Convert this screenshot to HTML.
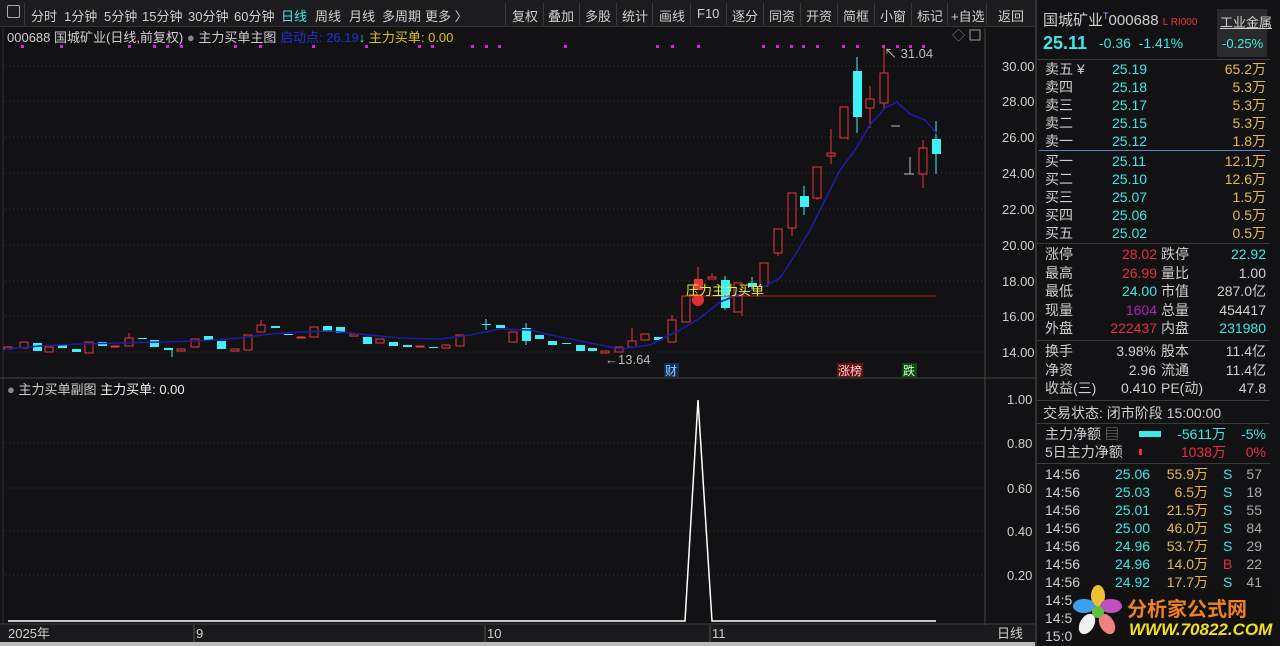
<!DOCTYPE html>
<html><head><meta charset="utf-8"><style>
*{margin:0;padding:0;box-sizing:border-box}
body{width:1280px;height:646px;background:#121214;overflow:hidden;font-family:"Liberation Sans","Noto Sans CJK SC",sans-serif;color:#ccc;position:relative}
.tb{position:absolute;left:0;top:0;width:1035px;height:27px;background:#1c1c1e;border-bottom:1px solid #333;font-size:13px}
.tb span{position:absolute;top:6px;color:#cfcfcf}
.tb i{position:absolute;top:3px;width:1px;height:22px;background:#3a3a3a}
.t{position:absolute;white-space:nowrap;font-size:13px}
.rp{position:absolute;left:1035px;top:0;width:245px;height:646px;background:#121214;border-left:2px solid #333}
.r{position:absolute;font-size:14px;white-space:nowrap}
.hl{position:absolute;left:0;width:233px;height:1px;background:#3a3a3a}
.c{color:#3ee8e8}.y{color:#e8b850}.rd{color:#e83040}.w{color:#cfcfcf}.g{color:#aaa}
</style></head><body>
<div class="tb">
<span style="left:7px;top:5px;width:13px;height:13px;border:1px solid #aaa;border-radius:2px"></span>
<i style="left:24px"></i>
<span style="left:31px">分时</span><span style="left:64px">1分钟</span><span style="left:104px">5分钟</span><span style="left:142px">15分钟</span><span style="left:188px">30分钟</span><span style="left:234px">60分钟</span><span style="left:281px;color:#3ee8e8">日线</span><span style="left:315px">周线</span><span style="left:349px">月线</span><span style="left:382px">多周期</span><span style="left:425px">更多 〉</span>
<i style="left:505px"></i><span style="left:512px">复权</span><i style="left:543px"></i><span style="left:548px">叠加</span><i style="left:579px"></i><span style="left:585px">多股</span><i style="left:616px"></i><span style="left:622px">统计</span><i style="left:652px"></i><span style="left:659px">画线</span><i style="left:690px"></i><span style="left:697px">F10</span><i style="left:726px"></i><span style="left:732px">逐分</span><i style="left:763px"></i><span style="left:769px">同资</span><i style="left:800px"></i><span style="left:806px">开资</span><i style="left:837px"></i><span style="left:843px">简框</span><i style="left:874px"></i><span style="left:880px">小窗</span><i style="left:911px"></i><span style="left:917px">标记</span><i style="left:947px"></i><span style="left:951px">+自选</span><i style="left:986px"></i><span style="left:998px">返回</span>
</div>
<div class="t w" style="left:7px;top:27px">000688 国城矿业(日线,前复权) <span style="color:#888">●</span> 主力买单主图 <span style="color:#2030d0">启动点: 26.19</span><span class="c">↓</span> <span style="color:#e0c020">主力买单: 0.00</span></div>
<div class="t w" style="left:7px;top:379px"><span style="color:#888">●</span> 主力买单副图 <span style="color:#eee">主力买单: 0.00</span></div>
<svg style="position:absolute;left:0;top:0" width="1035" height="646">
<g stroke="#3a3a3a" stroke-dasharray="1,3">
<line x1="5" y1="66" x2="985" y2="66"/><line x1="5" y1="101" x2="985" y2="101"/><line x1="5" y1="137" x2="985" y2="137"/><line x1="5" y1="173" x2="985" y2="173"/><line x1="5" y1="209" x2="985" y2="209"/><line x1="5" y1="245" x2="985" y2="245"/><line x1="5" y1="281" x2="985" y2="281"/><line x1="5" y1="316" x2="985" y2="316"/><line x1="5" y1="352" x2="985" y2="352"/>
<line x1="5" y1="443" x2="985" y2="443"/><line x1="5" y1="488" x2="985" y2="488"/><line x1="5" y1="531" x2="985" y2="531"/><line x1="5" y1="575" x2="985" y2="575"/>
</g>
<line x1="985" y1="28" x2="985" y2="642" stroke="#444"/>
<line x1="3" y1="28" x2="3" y2="642" stroke="#333"/>
<line x1="0" y1="378" x2="1035" y2="378" stroke="#444"/>
<line x1="0" y1="624" x2="1035" y2="624" stroke="#444"/>
<rect x="0" y="625" width="1035" height="17" fill="#1a1a1c"/>
<rect x="0" y="642" width="1035" height="4" fill="#bbb"/>
<g fill="#cfcfcf" font-size="13" font-family="Liberation Sans,Noto Sans CJK SC,sans-serif">
<text x="1002" y="71">30.00</text><text x="1002" y="106">28.00</text><text x="1002" y="142">26.00</text><text x="1002" y="178">24.00</text><text x="1002" y="214">22.00</text><text x="1002" y="250">20.00</text><text x="1002" y="286">18.00</text><text x="1002" y="321">16.00</text><text x="1002" y="357">14.00</text>
<text x="1007" y="404">1.00</text><text x="1007" y="448">0.80</text><text x="1007" y="493">0.60</text><text x="1007" y="536">0.40</text><text x="1007" y="580">0.20</text>
<text x="8" y="638">2025年</text><text x="196" y="638">9</text><text x="487" y="638">10</text><text x="712" y="638">11</text><text x="997" y="638">日线</text>
<text x="605" y="364" fill="#bbb">←13.64</text><text x="884" y="58" fill="#bbb">↖ 31.04</text>
</g>
<line x1="194" y1="625" x2="194" y2="642" stroke="#555"/><line x1="485" y1="625" x2="485" y2="642" stroke="#555"/><line x1="710" y1="625" x2="710" y2="642" stroke="#555"/>
<g fill="#e020e0">
<rect x="21" y="45" width="3" height="3"/><rect x="60" y="45" width="3" height="3"/><rect x="128" y="45" width="3" height="3"/><rect x="153" y="45" width="3" height="3"/><rect x="166" y="45" width="3" height="3"/><rect x="180" y="45" width="3" height="3"/><rect x="234" y="45" width="3" height="3"/><rect x="259" y="45" width="3" height="3"/><rect x="312" y="45" width="3" height="3"/><rect x="365" y="45" width="3" height="3"/><rect x="418" y="45" width="3" height="3"/><rect x="431" y="45" width="3" height="3"/><rect x="471" y="45" width="3" height="3"/><rect x="485" y="45" width="3" height="3"/><rect x="498" y="45" width="3" height="3"/><rect x="564" y="45" width="3" height="3"/><rect x="656" y="45" width="3" height="3"/><rect x="671" y="45" width="3" height="3"/><rect x="697" y="45" width="3" height="3"/><rect x="762" y="45" width="3" height="3"/><rect x="776" y="45" width="3" height="3"/><rect x="790" y="45" width="3" height="3"/><rect x="802" y="45" width="3" height="3"/><rect x="816" y="45" width="3" height="3"/><rect x="842" y="45" width="3" height="3"/><rect x="856" y="45" width="3" height="3"/><rect x="882" y="45" width="3" height="3"/><rect x="896" y="45" width="3" height="3"/><rect x="909" y="45" width="3" height="3"/><rect x="922" y="45" width="3" height="3"/>
</g>
<g fill="none" stroke="#e8383d" stroke-width="1">
<rect x="4" y="347" width="8" height="2"/><rect x="20" y="342" width="8" height="6"/><rect x="45" y="347" width="8" height="5"/><rect x="85" y="342" width="8" height="11"/><rect x="111" y="346" width="8" height="1"/><rect x="125" y="338" width="8" height="8"/><rect x="177" y="349" width="8" height="2"/><rect x="191" y="339" width="8" height="8"/><rect x="231" y="349" width="8" height="2"/><rect x="244" y="335" width="8" height="15"/><rect x="257" y="325" width="8" height="7"/><rect x="297" y="337" width="8" height="1"/><rect x="310" y="327" width="8" height="10"/><rect x="350" y="334" width="8" height="2"/><rect x="376" y="339" width="8" height="4"/><rect x="416" y="346" width="8" height="1"/><rect x="442" y="345" width="8" height="3"/><rect x="456" y="335" width="8" height="11"/><rect x="509" y="332" width="8" height="10"/><rect x="601" y="351" width="8" height="2"/><rect x="615" y="347" width="8" height="5"/><rect x="628" y="341" width="8" height="6"/><rect x="641" y="334" width="8" height="6"/>
<rect x="668" y="320" width="8" height="22"/><rect x="682" y="296" width="8" height="26"/><rect x="708" y="277" width="8" height="2"/><rect x="734" y="283" width="8" height="29"/><rect x="760" y="263" width="8" height="23"/><rect x="774" y="229" width="8" height="24"/><rect x="788" y="193" width="8" height="35"/><rect x="813" y="167" width="8" height="31"/><rect x="827" y="153" width="8" height="3"/><rect x="840" y="107" width="8" height="31"/><rect x="866" y="99" width="8" height="9"/><rect x="880" y="73" width="8" height="30"/><rect x="919" y="148" width="8" height="26"/>
</g>
<g stroke="#e8383d">
<line x1="129" y1="333" x2="129" y2="338"/><line x1="261" y1="320" x2="261" y2="325"/><line x1="632" y1="328" x2="632" y2="341"/><line x1="672" y1="315" x2="672" y2="320"/><line x1="698" y1="267" x2="698" y2="279"/><line x1="712" y1="273" x2="712" y2="277"/><line x1="742" y1="312" x2="742" y2="316"/><line x1="831" y1="129" x2="831" y2="153"/><line x1="831" y1="156" x2="831" y2="164"/><line x1="848" y1="138" x2="848" y2="140"/><line x1="870" y1="86" x2="870" y2="99"/><line x1="870" y1="108" x2="870" y2="128"/><line x1="884" y1="47" x2="884" y2="73"/><line x1="884" y1="103" x2="884" y2="110"/><line x1="923" y1="140" x2="923" y2="148"/><line x1="923" y1="174" x2="923" y2="188"/><line x1="817" y1="198" x2="817" y2="200"/><line x1="792" y1="228" x2="792" y2="236"/><line x1="778" y1="253" x2="778" y2="256"/>
</g>
<rect x="694" y="279" width="9" height="11" fill="#e8383d"/>
<g fill="#40f0f8">
<rect x="33" y="343" width="9" height="8"/><rect x="58" y="345" width="9" height="3"/><rect x="72" y="349" width="9" height="3"/><rect x="98" y="342" width="9" height="4"/><rect x="138" y="338" width="9" height="1"/><rect x="150" y="340" width="9" height="7"/><rect x="164" y="348" width="9" height="2"/><rect x="204" y="336" width="9" height="4"/><rect x="217" y="341" width="9" height="8"/><rect x="271" y="326" width="9" height="2"/><rect x="284" y="334" width="9" height="1"/><rect x="323" y="326" width="9" height="6"/><rect x="336" y="327" width="9" height="6"/><rect x="363" y="337" width="9" height="7"/><rect x="389" y="342" width="9" height="4"/><rect x="403" y="345" width="9" height="2"/><rect x="429" y="347" width="9" height="1"/><rect x="482" y="324" width="9" height="1"/><rect x="496" y="325" width="9" height="3"/><rect x="522" y="328" width="9" height="13"/><rect x="535" y="335" width="9" height="4"/><rect x="548" y="341" width="9" height="4"/><rect x="562" y="343" width="9" height="1"/><rect x="576" y="345" width="9" height="6"/><rect x="588" y="348" width="9" height="3"/>
<rect x="654" y="337" width="9" height="3"/><rect x="721" y="280" width="9" height="28"/><rect x="748" y="283" width="9" height="4"/><rect x="800" y="196" width="9" height="11"/><rect x="853" y="71" width="9" height="46"/><rect x="932" y="139" width="9" height="15"/>
</g>
<g stroke="#40f0f8">
<line x1="172" y1="350" x2="172" y2="357"/><line x1="486" y1="319" x2="486" y2="330"/><line x1="526" y1="323" x2="526" y2="345"/><line x1="804" y1="186" x2="804" y2="215"/><line x1="857" y1="57" x2="857" y2="133"/><line x1="936" y1="121" x2="936" y2="174"/><line x1="752" y1="277" x2="752" y2="290"/><line x1="725" y1="276" x2="725" y2="310"/>
</g>
<g stroke="#bbb"><line x1="891" y1="126" x2="900" y2="126"/><line x1="904" y1="174" x2="914" y2="174"/><line x1="910" y1="157" x2="910" y2="174"/></g>
<polyline fill="none" stroke="#1c1ca8" stroke-width="1.6" points="5,349 40,346 80,344 120,343 160,342 200,341 240,338 270,334 300,332 330,331 360,334 400,338 440,339 470,335 500,329 530,330 560,337 590,343 620,349 650,345 680,330 700,318 720,302 745,292 765,286 780,278 795,255 810,230 825,200 840,170 855,150 870,125 885,108 897,102 910,114 925,120 937,134"/>
<line x1="686" y1="296" x2="936" y2="296" stroke="#d02020"/>
<circle cx="698" cy="300" r="6" fill="#e03030"/>
<text x="686" y="295" fill="#f0f020" font-size="13" font-family="Noto Sans CJK SC,sans-serif">压力主力买单</text>
<rect x="664" y="363" width="15" height="14" fill="#10305a"/><text x="665" y="375" fill="#9cf" font-size="12" font-family="Noto Sans CJK SC,sans-serif">财</text>
<rect x="837" y="363" width="26" height="14" fill="#6a1010"/><text x="838" y="375" fill="#fcc" font-size="12" font-family="Noto Sans CJK SC,sans-serif">涨榜</text>
<rect x="902" y="363" width="15" height="14" fill="#104a10"/><text x="903" y="375" fill="#cfc" font-size="12" font-family="Noto Sans CJK SC,sans-serif">跌</text>
<text x="952" y="40" fill="#888" font-size="13">◇</text><rect x="970" y="30" width="10" height="10" fill="none" stroke="#999"/>
<polyline fill="none" stroke="#fff" stroke-width="1.5" points="8,621 685,621 698,400 712,621 936,621"/>
</svg>
<div class="rp">
<div class="r w" style="left:6px;top:9px;font-size:15px">国城矿业<sup style="font-size:9px;color:#8af">T</sup>000688 <span style="font-size:10px;color:#e33">L RI000</span></div>
<div style="position:absolute;left:180px;top:9px;width:50px;height:48px;background:#2a2a2c"></div>
<div class="r w" style="left:183px;top:12px;font-size:13px;text-decoration:underline">工业金属</div>
<div class="r c" style="left:185px;top:36px;font-size:13px">-0.25%</div>
<div class="r c" style="left:6px;top:33px;font-size:18px;font-weight:bold">25.11</div>
<div class="r c" style="left:62px;top:35px">-0.36 &nbsp;-1.41%</div>
<div class="hl" style="top:59px"></div>
<div class="r w" style="left:8px;top:60px;line-height:18px">卖五 ¥<br>卖四<br>卖三<br>卖二<br>卖一</div>
<div class="r c" style="left:75px;top:60px;line-height:18px">25.19<br>25.18<br>25.17<br>25.15<br>25.12</div>
<div class="r y" style="right:14px;top:60px;line-height:18px;text-align:right">65.2万<br>5.3万<br>5.3万<br>5.3万<br>1.8万</div>
<div style="position:absolute;left:2px;top:150px;width:231px;height:1px;background:#4a8ad0"></div>
<div class="r w" style="left:8px;top:152px;line-height:18px">买一<br>买二<br>买三<br>买四<br>买五</div>
<div class="r c" style="left:75px;top:152px;line-height:18px">25.11<br>25.10<br>25.07<br>25.06<br>25.02</div>
<div class="r y" style="right:14px;top:152px;line-height:18px;text-align:right">12.1万<br>12.6万<br>1.5万<br>0.5万<br>0.5万</div>
<div class="hl" style="top:243px"></div>
<div class="r w" style="left:8px;top:245px;line-height:18.6px">涨停<br>最高<br>最低<br>现量<br>外盘</div>
<div class="r" style="right:123px;top:245px;line-height:18.6px;text-align:right"><span class="rd">28.02</span><br><span class="rd">26.99</span><br><span class="c">24.00</span><br><span style="color:#b020c0">1604</span><br><span class="rd">222437</span></div>
<div class="r w" style="left:124px;top:245px;line-height:18.6px">跌停<br>量比<br>市值<br>总量<br>内盘</div>
<div class="r" style="right:14px;top:245px;line-height:18.6px;text-align:right"><span class="c">22.92</span><br><span class="w">1.00</span><br><span class="w">287.0亿</span><br><span class="w">454417</span><br><span class="c">231980</span></div>
<div class="hl" style="top:340px"></div>
<div class="r w" style="left:8px;top:342px;line-height:18.6px">换手<br>净资<br>收益(三)</div>
<div class="r w" style="right:124px;top:342px;line-height:18.6px;text-align:right">3.98%<br>2.96<br>0.410</div>
<div class="r w" style="left:124px;top:342px;line-height:18.6px">股本<br>流通<br>PE(动)</div>
<div class="r w" style="right:14px;top:342px;line-height:18.6px;text-align:right">11.4亿<br>11.4亿<br>47.8</div>
<div class="hl" style="top:400px"></div>
<div class="r w" style="left:6px;top:403px">交易状态: 闭市阶段 15:00:00</div>
<div class="hl" style="top:423px"></div>
<div class="r w" style="left:8px;top:425px;line-height:18px">主力净额 <span style="color:#888">▤</span><br>5日主力净额</div>
<div style="position:absolute;left:102px;top:431px;width:22px;height:6px;background:#3ee8e8"></div>
<div style="position:absolute;left:102px;top:449px;width:3px;height:6px;background:#e83040"></div>
<div class="r" style="right:54px;top:425px;line-height:18px;text-align:right"><span class="c">-5611万</span><br><span class="rd">1038万</span></div>
<div class="r" style="right:14px;top:425px;line-height:18px;text-align:right"><span class="c">-5%</span><br><span class="rd">0%</span></div>
<div class="hl" style="top:463px"></div>
<div class="r w" style="left:8px;top:465px;line-height:18px">14:56<br>14:56<br>14:56<br>14:56<br>14:56<br>14:56<br>14:56<br>14:56<br>14:56<br>15:00</div>
<div class="r c" style="left:78px;top:465px;line-height:18px">25.06<br>25.03<br>25.01<br>25.00<br>24.96<br>24.96<br>24.92</div>
<div class="r y" style="right:72px;top:465px;line-height:18px;text-align:right">55.9万<br>6.5万<br>21.5万<br>46.0万<br>53.7万<br>14.0万<br>17.7万</div>
<div class="r" style="left:186px;top:465px;line-height:18px"><span class="c">S</span><br><span class="c">S</span><br><span class="c">S</span><br><span class="c">S</span><br><span class="c">S</span><br><span class="rd">B</span><br><span class="c">S</span></div>
<div class="r g" style="right:18px;top:465px;line-height:18px;text-align:right">57<br>18<br>55<br>84<br>29<br>22<br>41</div>
<div style="position:absolute;left:35px;top:588px;width:200px;height:58px;background:#111"></div>
<svg style="position:absolute;left:36px;top:582px" width="50" height="60">
<ellipse cx="25" cy="14" rx="7" ry="11" fill="#f0c030"/>
<ellipse cx="38" cy="24" rx="11" ry="7" fill="#c050c0"/>
<ellipse cx="34" cy="42" rx="7" ry="11" fill="#f08080" transform="rotate(-30 34 42)"/>
<ellipse cx="14" cy="42" rx="7" ry="11" fill="#f0f0f0" transform="rotate(30 14 42)"/>
<ellipse cx="11" cy="24" rx="11" ry="7" fill="#40a0f0"/>
<circle cx="25" cy="30" r="6" fill="#60c040"/>
</svg>
<div class="r" style="left:90px;top:593px;font-size:20px;font-weight:bold;color:#f08020;font-family:'Noto Sans CJK SC',sans-serif">分析家公式网</div>
<div class="r" style="left:92px;top:620px;font-size:17px;font-weight:bold;font-style:italic;color:#f0e020">WWW.70822.COM</div>
</div>
</body></html>
